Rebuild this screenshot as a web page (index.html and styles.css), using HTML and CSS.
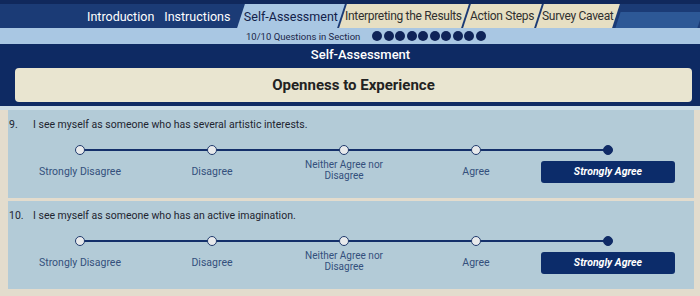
FILE: index.html
```html
<!DOCTYPE html>
<html>
<head>
<meta charset="utf-8">
<link rel="stylesheet" href="styles.css">
</head>
<body>
<div class="page">
  <header class="top">
    <nav class="tabs">
      <span class="tab plain">Introduction</span>
      <span class="tab plain">Instructions</span>
      <span class="tab slant active"><span>Self-Assessment</span></span>
      <span class="tab slant beige w1"><span>Interpreting the Results</span></span>
      <span class="tab slant beige w2"><span>Action Steps</span></span>
      <span class="tab slant beige w3"><span>Survey Caveat</span></span>
      <span class="tab slant fill"></span>
    </nav>
    <div class="progress">
      <span class="progress-text">10/10 Questions in Section</span>
      <span class="dots"><i></i><i></i><i></i><i></i><i></i><i></i><i></i><i></i><i></i><i></i></span>
    </div>
  </header>

  <section class="section">
    <h1 class="section-title">Self-Assessment</h1>
    <div class="trait">Openness to Experience</div>
  </section>

  <div class="questions">
    <div class="question">
      <p class="q-text"><span class="q-num">9.</span>I see myself as someone who has several artistic interests.</p>
      <div class="scale">
        <div class="track"></div>
        <div class="opt"><span class="dot"></span><span class="lbl">Strongly Disagree</span></div>
        <div class="opt"><span class="dot"></span><span class="lbl">Disagree</span></div>
        <div class="opt"><span class="dot"></span><span class="lbl two"><span class="ln">Neither Agree nor</span><span class="ln">Disagree</span></span></div>
        <div class="opt"><span class="dot"></span><span class="lbl">Agree</span></div>
        <div class="opt"><span class="dot on"></span><span class="lbl btn">Strongly Agree</span></div>
      </div>
    </div>
    <div class="question">
      <p class="q-text"><span class="q-num">10.</span>I see myself as someone who has an active imagination.</p>
      <div class="scale">
        <div class="track"></div>
        <div class="opt"><span class="dot"></span><span class="lbl">Strongly Disagree</span></div>
        <div class="opt"><span class="dot"></span><span class="lbl">Disagree</span></div>
        <div class="opt"><span class="dot"></span><span class="lbl two"><span class="ln">Neither Agree nor</span><span class="ln">Disagree</span></span></div>
        <div class="opt"><span class="dot"></span><span class="lbl">Agree</span></div>
        <div class="opt"><span class="dot on"></span><span class="lbl btn">Strongly Agree</span></div>
      </div>
    </div>
  </div>
</div>
</body>
</html>
```

FILE: styles.css
```css
* { box-sizing: border-box; }
html, body { margin: 0; padding: 0; }
body {
  width: 700px;
  height: 296px;
  overflow: hidden;
  background: #e3dccd;
  font-family: Roboto, "Liberation Sans", sans-serif;
}
.page { width: 700px; }

.top { background: #13306a; }
.tabs {
  height: 28px;
  display: flex;
  align-items: flex-end;
  padding-left: 84px;
  background: linear-gradient(#10285c 0 4px, #1b3b76 4px);
  overflow: hidden;
}
.tab {
  height: 24px;
  display: flex;
  align-items: center;
  font-size: 12px;
  white-space: nowrap;
}
.plain { color: #fff; font-size: 12.5px; padding: 0 5px 0 3px; }
.plain + .plain { margin-left: 2px; }
.slant {
  transform: skewX(-18deg);
  justify-content: center;
  margin-left: 2px;
}
.slant > span { display: inline-block; transform: skewX(18deg); }
.active {
  background: #a9c7e3;
  color: #12214a;
  font-size: 12.5px;
  width: 110px;
  margin-left: 6px;
}
.beige { background: #e6dfc3; color: #2f2f2f; letter-spacing: -0.3px; }
.w1 { width: 134px; }
.w2 { width: 78px; }
.w3 { width: 84px; }
.fill { background: #2d5896; height: 16px; width: 90px; }

.progress {
  height: 16px;
  background: #a9c7e3;
  display: flex;
  align-items: center;
  padding-left: 246px;
}
.progress-text { font-size: 9.5px; color: #1a2648; }
.dots { display: flex; gap: 1.5px; margin-left: 12px; }
.dots i { width: 10px; height: 10px; border-radius: 50%; background: #0f2458; }

.section {
  background: #0e2a63;
  height: 62px;
  padding: 3px 8px 0 15px;
}
.section-title {
  margin: 0;
  height: 17px;
  font-size: 13px;
  font-weight: 500;
  color: #fff;
  text-align: center;
  padding-left: 14px;
}
.trait {
  margin-top: 4px;
  height: 34px;
  border-radius: 4px;
  background: #e9e5d0;
  display: flex;
  align-items: center;
  justify-content: center;
  font-size: 15px;
  font-weight: 700;
  color: #222;
}

.questions {
  border-top: 4px solid #cddde6;
  padding-left: 8px;
  padding-right: 6px;
}
.question {
  background: #b3cbd7;
  height: 88px;
  padding-top: 8px;
}
.question + .question { margin-top: 3px; }
.q-text {
  margin: 0;
  font-size: 10.5px;
  color: #1e2530;
  display: flex;
}
.q-num { width: 25px; padding-left: 1px; }

.scale {
  position: relative;
  display: grid;
  grid-template-columns: repeat(5, 132px);
  padding-left: 6px;
  margin-top: 14px;
}
.track {
  position: absolute;
  left: 72px;
  width: 528px;
  top: 4px;
  height: 1.5px;
  background: #14306a;
}
.opt {
  display: flex;
  flex-direction: column;
  align-items: center;
  position: relative;
}
.dot {
  width: 10px;
  height: 10px;
  border-radius: 50%;
  background: #e8eaec;
  border: 1.5px solid #203a6c;
}
.dot.on { background: #102b66; border-color: #102b66; }
.lbl {
  margin-top: 11px;
  font-size: 10.5px;
  line-height: 12px;
  color: #34507c;
  text-align: center;
  white-space: nowrap;
}
.lbl.two {
  margin-top: 4px;
  font-size: 10px;
  line-height: 12px;
  display: flex;
  flex-direction: column;
  align-items: center;
}
.ln { display: block; height: 11px; line-height: 11px; }
.lbl.btn {
  margin-top: 6px;
  width: 134px;
  height: 22px;
  line-height: 22px;
  border-radius: 3px;
  background: #0c2c6a;
  color: #fff;
  font-weight: 700;
  font-style: italic;
  font-size: 10.5px;
}
```
